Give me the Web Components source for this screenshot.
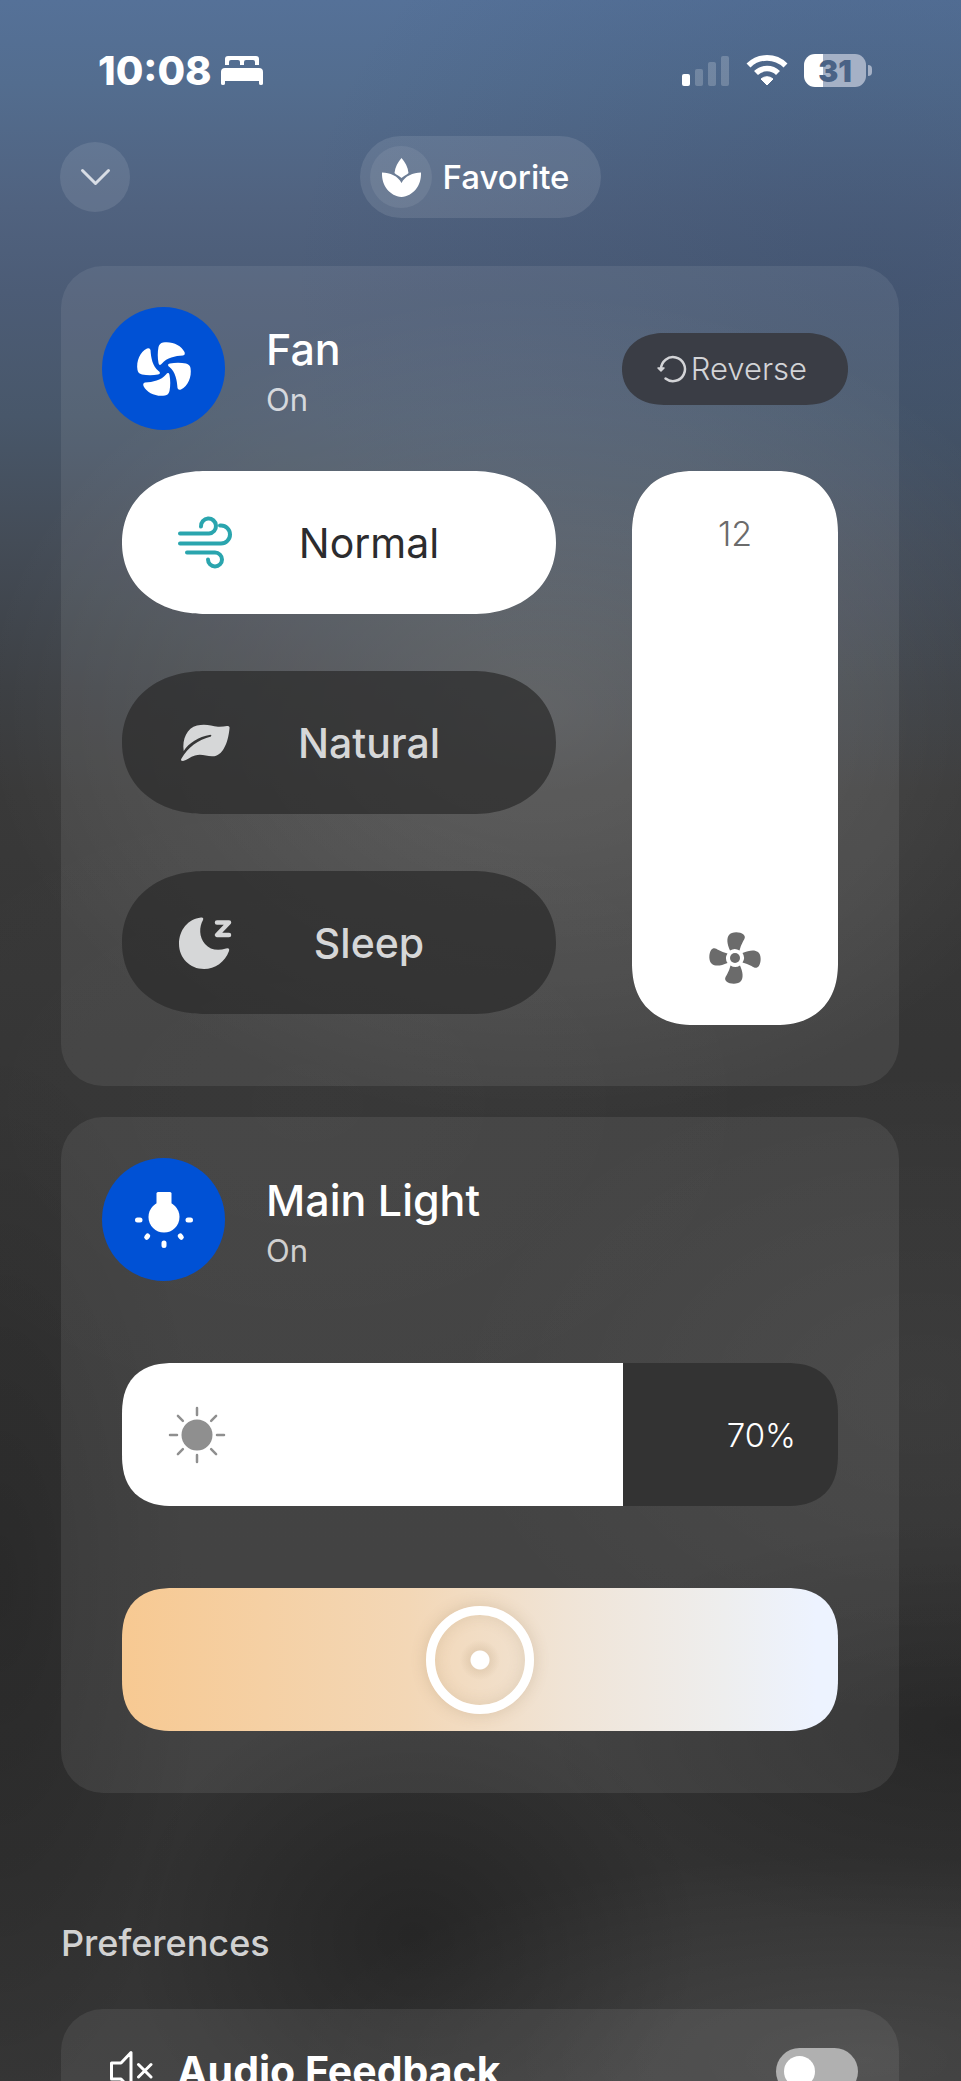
<!DOCTYPE html>
<html lang="en">
<head>
<meta charset="utf-8">
<meta name="viewport" content="width=device-width, initial-scale=1">
<title>Fan</title>
<style>
  html, body {
    margin: 0;
    height: 100%;
  }

  body {
    background: #333333;
    color: #ffffff;
    font-family: Inter, "Liberation Sans", sans-serif;
  }
</style>
</head>
<body>
<device-screen>
  <status-bar slot="status" time="10:08" battery="31"></status-bar>
  <top-bar slot="top">Favorite</top-bar>

  <device-card>
    <ui-icon slot="icon" name="blower" width="54" height="54"></ui-icon>
    <span slot="title">Fan</span>
    <span slot="state">On</span>
    <pill-button slot="action"><ui-icon slot="icon" name="reverse" width="28" height="27"></ui-icon>Reverse</pill-button>
    <fan-controls>
      <mode-button slot="modes" selected><ui-icon slot="icon" name="wind" width="54" height="52"></ui-icon>Normal</mode-button>
      <mode-button slot="modes"><ui-icon slot="icon" name="leaf" width="49" height="38"></ui-icon>Natural</mode-button>
      <mode-button slot="modes"><ui-icon slot="icon" name="moon" width="53" height="52"></ui-icon>Sleep</mode-button>
      <speed-slider slot="speed" value="12" max="12"></speed-slider>
    </fan-controls>
  </device-card>

  <device-card>
    <ui-icon slot="icon" name="bulb" width="58" height="56"></ui-icon>
    <span slot="title">Main Light</span>
    <span slot="state">On</span>
    <light-controls brightness="70" warmth="50"></light-controls>
  </device-card>

  <pref-section heading="Preferences">
    <pref-toggle><ui-icon slot="icon" name="muted" width="42" height="40"></ui-icon>Audio Feedback</pref-toggle>
  </pref-section>
</device-screen>

<script>
const icons = {
  bed: `<path d="M4 9V3a3 3 0 0 1 3-3h28a3 3 0 0 1 3 3v6h-4V6a2 2 0 0 0-2-2h-7a2 2 0 0 0-2 2v3h-4V6a2 2 0 0 0-2-2h-7a2 2 0 0 0-2 2v3z"/>
    <path d="M0 27.500V16a4 4 0 0 1 4-4h34a4 4 0 0 1 4 4v11.500q0 1.500-2 1.500t-2-1.500V25H4v2.500Q4 29 2 29t-2-1.500z"/>`,
  signal: `<rect y="18" width="8" height="12" rx="2"/>
    <g opacity=".2"><rect x="13" y="13" width="8" height="17" rx="2"/><rect x="26" y="6" width="8" height="24" rx="2"/><rect x="39" width="8" height="30" rx="2"/></g>`,
  wifi: `<g fill="none" stroke="currentColor" stroke-width="5.600"><path d="M2.500 10.500A26.300 26.300 0 0 1 39.500 10.500"/><path d="M10 18A15.700 15.700 0 0 1 32 18"/></g>
    <path d="M21 30l-6-6a9 9 0 0 1 12 0z" stroke="currentColor" stroke-linejoin="round"/>`,
  chevron: `<path d="M1.500 1.500l13 13 13-13" fill="none" stroke="currentColor" stroke-width="3" stroke-linecap="round" stroke-linejoin="round"/>`,
  lotus: `<path d="M19.500 0C23 4 26 9 26.500 15 25 16.500 22 18 19.500 20 17 18 14 16.500 12.500 15 13 9 16 4 19.500 0z"/>
    <path d="M0 14.500C8 14.500 16 18 19.500 25 23 18 31 14.500 39 14.500 39.500 28 31 38 19.500 39 8 38-.5 28 0 14.500z"/>`,
  blower: [0, 90, 180, 270].map((a) => `<path transform="rotate(${a} 27 27)" d="M21.500 21C20.500 16 20.500 10 21.500 5Q22.500 1 26 .5C35-1 44 3 47.500 10Q48.500 13 46 13.500C38 14 30 15.500 25 21.500 23.500 23.500 22 23.500 21.500 21z"/>`).join(""),
  reverse: `<path d="M8.500 23.500A12 12 0 1 0 4 14" fill="none" stroke="currentColor" stroke-width="2.500" stroke-linecap="round"/>
    <path d="M1 13h6l-3 3z" stroke="currentColor" stroke-width="1.500" stroke-linejoin="round"/>`,
  wind: `<g fill="none" stroke="currentColor" stroke-width="4" stroke-linecap="round"><path d="M2 16.500h29A7.500 7.500 0 1 0 23 9.500"/><path d="M2 26.500h41a9 9 0 0 0 0-18h-1"/><path d="M9 35.500h28a7 7 0 1 1-7 7"/></g>`,
  leaf: `<path d="M2.700 27C1 15 6 4 16 1.500 24-.5 30 1.500 37 2.800Q42 3 46 2 49 1.500 48.500 4.500C47 20 41 33 31 32.300 25 32 20 29.500 14 31.500 9 33 6 36 2 37Q-1 37 .5 34.500C7 23 17 16 30 12.500Q31 11 29.500 10.800C17 13 8 19 2.700 27z"/>`,
  moon: `<path d="M22 .5Q25 0 24 3C20 10 20 20 26 27C31 33 39 34 47 31.500Q51 30.500 50 34C46 45 36 52 25 52C11 52 0 41 0 27C0 13 9 2 22 .5z"/>
    <path d="M38 5.500h12L38 18h12" fill="none" stroke="currentColor" stroke-width="4.500" stroke-linecap="round" stroke-linejoin="round"/>`,
  propeller: `<circle cx="25" cy="26" r="5"/>` + [0, 90, 180, 270].map((a) => `<path transform="rotate(${a} 25 26)" d="M20 18.500C17 12 16.500 6 19 3C21.500-.5 30-.5 33.500 2.500C36 5 34.500 7 33 9.500Q30.500 14 29.500 18.500A8.500 8.500 0 0 0 20 18.500z"/>`).join(""),
  bulb: `<path d="M21.500 1.500Q21.500 0 23 0h12q1.500 0 1.500 1.500v11h-15z"/><circle cx="29" cy="25" r="15.500"/>
    <g stroke="currentColor" stroke-width="5" stroke-linecap="round"><path d="M2.500 28h2.500M53 28h2.500M29 51v2.500M12.700 44l-1 1.300M45.300 44l1 1.300"/></g>`,
  sun: `<circle cx="28" cy="28" r="15.500"/>` + [0, 45, 90, 135, 180, 225, 270, 315].map((a) => `<path transform="rotate(${a} 28 28)" d="M28 1v7" stroke="currentColor" stroke-width="2.500" stroke-linecap="round"/>`).join(""),
  muted: `<path d="M1.500 12H11L21 1.500v37L11 28H1.500zM28.500 13.500L41 26M41 13.500L28.500 26" fill="none" stroke="currentColor" stroke-width="3" stroke-linecap="round" stroke-linejoin="round"/>`,
};

class UiIcon extends HTMLElement {
  constructor() {
    super();
    this.attachShadow({ mode: "open" });
  }

  connectedCallback() {
    const w = this.getAttribute("width");
    const h = this.getAttribute("height");
    this.shadowRoot.innerHTML = `
      <style>
        :host {
          display: block;
          flex: none;
        }

        svg {
          display: block;
          fill: currentColor;
          overflow: visible;
        }
      </style>
      <svg width="${w}" height="${h}" viewBox="0 0 ${w} ${h}" aria-hidden="true">${icons[this.getAttribute("name")]}</svg>
    `;
  }
}

class DeviceScreen extends HTMLElement {
  constructor() {
    super();
    this.attachShadow({ mode: "open" });
    this.shadowRoot.innerHTML = `
      <style>
        :host {
          display: block;
          height: 100vh;
          overflow-y: auto;
          scrollbar-width: none;
          background:
            radial-gradient(ellipse 58% 20% at 56% 34%, rgba(255, 255, 255, 0.13), transparent),
            radial-gradient(ellipse 50% 16% at 32% 53%, rgba(255, 255, 255, 0.02), transparent),
            radial-gradient(ellipse 50% 16% at 96% 67%, rgba(255, 255, 255, 0.04), transparent),
            radial-gradient(ellipse 44% 10% at 100% 83%, rgba(0, 0, 0, 0.22), transparent),
            radial-gradient(ellipse 30% 12% at 43% 93%, rgba(0, 0, 0, 0.26), transparent),
            radial-gradient(ellipse 22% 26% at 0% 76%, rgba(0, 0, 0, 0.2), transparent),
            radial-gradient(ellipse 60% 10% at 90% 99%, rgba(255, 255, 255, 0.08), transparent),
            radial-gradient(ellipse 60% 24% at 90% 14%, rgba(40, 62, 96, 0.24), transparent),
            linear-gradient(#557198 0%, #536d8f 4%, #50627f 10%, #4c5c76 14%, #48576a 20%, #444c57 26%, #3c3f43 33%, #393939 38%, #353535 50%, #343434 75%, #323232 90%, #363636 100%);
        }

        main {
          display: flex;
          flex-direction: column;
          gap: 31px;
          padding: 48px 62px 61px 61px;
        }
      </style>
      <slot name="status"></slot>
      <slot name="top"></slot>
      <main><slot></slot></main>
    `;
  }
}

class StatusBar extends HTMLElement {
  constructor() {
    super();
    this.attachShadow({ mode: "open" });
  }

  connectedCallback() {
    const level = this.getAttribute("battery");
    this.shadowRoot.innerHTML = `
      <style>
        :host {
          display: flex;
          align-items: center;
          justify-content: space-between;
          box-sizing: border-box;
          height: 136px;
          padding: 5px 89px 0 98px;
        }

        div {
          display: flex;
          align-items: center;
        }

        .left {
          gap: 9px;
        }

        .right {
          gap: 16px;
        }

        time {
          font-size: 40px;
          font-weight: 800;
          line-height: 48px;
        }

        .battery {
          gap: 2px;
        }

        .cell {
          justify-content: center;
          width: 62px;
          height: 33px;
          border-radius: 11px;
          background: linear-gradient(90deg, #ffffff ${level}%, #a5b1c6 ${level}%);
          color: #4a6285;
          font-size: 30px;
          font-weight: 900;
        }

        .nub {
          width: 4px;
          height: 11px;
          border-radius: 0 6px 6px 0;
          background: #a5b1c6;
        }
      </style>
      <div class="left">
        <time>${this.getAttribute("time")}</time>
        <ui-icon name="bed" width="42" height="29"></ui-icon>
      </div>
      <div class="right">
        <ui-icon name="signal" width="48" height="30"></ui-icon>
        <ui-icon name="wifi" width="42" height="31"></ui-icon>
        <div class="battery"><div class="cell">${level}</div><div class="nub"></div></div>
      </div>
    `;
  }
}

class TopBar extends HTMLElement {
  constructor() {
    super();
    this.attachShadow({ mode: "open" });
    this.shadowRoot.innerHTML = `
      <style>
        :host {
          display: grid;
          grid-template-columns: 1fr auto 1fr;
          align-items: center;
          padding: 0 60px;
        }

        button {
          display: flex;
          align-items: center;
          border: 0;
          color: #ffffff;
          font: inherit;
          background: rgba(255, 255, 255, 0.1);
          cursor: pointer;
        }

        .back {
          justify-content: center;
          width: 70px;
          height: 70px;
          padding: 0;
          border-radius: 50%;
          color: #d8dde5;
        }

        .favorite {
          gap: 10px;
          height: 82px;
          padding: 0 31px 0 10px;
          border-radius: 41px;
          font-size: 33px;
          font-weight: 500;
        }

        .badge {
          display: grid;
          place-items: center;
          width: 62px;
          height: 62px;
          border-radius: 50%;
          background: rgba(255, 255, 255, 0.08);
        }
      </style>
      <button class="back" aria-label="Close"><ui-icon name="chevron" width="29" height="16"></ui-icon></button>
      <button class="favorite"><span class="badge"><ui-icon name="lotus" width="39" height="39"></ui-icon></span><slot></slot></button>
    `;
  }
}

class DeviceCard extends HTMLElement {
  constructor() {
    super();
    this.attachShadow({ mode: "open" });
    this.shadowRoot.innerHTML = `
      <style>
        :host {
          display: block;
          padding: 41px;
          border-radius: 42px;
          background: rgba(255, 255, 255, 0.08);
        }

        header {
          display: flex;
          align-items: center;
          gap: 41px;
          padding-right: 10px;
          margin-bottom: 41px;
        }

        .power {
          display: grid;
          place-items: center;
          flex: none;
          width: 123px;
          height: 123px;
          padding: 0;
          border: 0;
          border-radius: 50%;
          background: #0051d5;
          color: #ffffff;
          cursor: pointer;
        }

        .names {
          flex: 1;
          padding-top: 10px;
        }

        h2 {
          margin: 0;
          font-size: 43px;
          font-weight: 500;
          line-height: 52px;
        }

        p {
          margin: 0;
          color: rgba(255, 255, 255, 0.75);
          font-size: 31px;
          line-height: 50px;
        }
      </style>
      <header>
        <button class="power" aria-label="Power"><slot name="icon"></slot></button>
        <div class="names">
          <h2><slot name="title"></slot></h2>
          <p><slot name="state"></slot></p>
        </div>
        <slot name="action"></slot>
      </header>
      <slot></slot>
    `;
  }
}

class PillButton extends HTMLElement {
  constructor() {
    super();
    this.attachShadow({ mode: "open" });
    this.shadowRoot.innerHTML = `
      <style>
        :host {
          display: block;
        }

        button {
          display: flex;
          align-items: center;
          gap: 6px;
          height: 72px;
          padding: 0 41px 0 35px;
          border: 0;
          border-radius: 36px;
          background: #3a3d45;
          color: #d3d4d7;
          font: 300 31px Inter, sans-serif;
          cursor: pointer;
        }

        @supports (corner-shape: squircle) {
          button {
            border-radius: 42px / 36px;
            corner-shape: superellipse(1.1);
          }
        }
      </style>
      <button><slot name="icon"></slot><slot></slot></button>
    `;
  }
}

class FanControls extends HTMLElement {
  constructor() {
    super();
    this.attachShadow({ mode: "open" });
    this.shadowRoot.innerHTML = `
      <style>
        :host {
          display: grid;
          grid-template-columns: 434fr 206fr;
          gap: 76px;
          padding: 0 20px 20px;
        }

        .modes {
          display: flex;
          flex-direction: column;
          gap: 57px;
        }
      </style>
      <div class="modes"><slot name="modes"></slot></div>
      <slot name="speed"></slot>
    `;

    this.addEventListener("click", (e) => {
      const mode = e.target.closest("mode-button");
      if (!mode) return;
      this.querySelectorAll("mode-button").forEach((m) => m.toggleAttribute("selected", m === mode));
    });
  }
}

class ModeButton extends HTMLElement {
  constructor() {
    super();
    this.attachShadow({ mode: "open" });
    this.shadowRoot.innerHTML = `
      <style>
        :host {
          display: block;
        }

        button {
          display: grid;
          grid-template-columns: 124px 1fr;
          align-items: center;
          width: 100%;
          height: 143px;
          padding: 0 64px 0 0;
          border: 0;
          border-radius: 72px;
          background: rgba(42, 42, 42, 0.7);
          color: #d6d7d8;
          font: 500 41px Inter, sans-serif;
          cursor: pointer;
        }

        @supports (corner-shape: squircle) {
          button {
            border-radius: 84px / 72px;
            corner-shape: superellipse(1.1);
          }
        }

        .icon {
          display: grid;
          justify-items: center;
          width: 166px;
        }

        :host([selected]) button {
          background: #ffffff;
          color: #2c2c2e;
          font-weight: 400;
        }

        :host([selected]) .icon {
          color: #2aa5ae;
        }
      </style>
      <button><span class="icon"><slot name="icon"></slot></span><span><slot></slot></span></button>
    `;
  }

  attributeChangedCallback() {
    this.shadowRoot.querySelector("button").setAttribute("aria-pressed", this.hasAttribute("selected"));
  }

  static get observedAttributes() {
    return ["selected"];
  }
}

class SpeedSlider extends HTMLElement {
  constructor() {
    super();
    this.attachShadow({ mode: "open" });
  }

  connectedCallback() {
    const value = this.getAttribute("value");
    const max = this.getAttribute("max");
    this.shadowRoot.innerHTML = `
      <style>
        :host {
          display: grid;
          height: 554px;
          border-radius: 56px;
          overflow: hidden;
          background: rgba(42, 42, 42, 0.7);
        }

        @supports (corner-shape: squircle) {
          :host {
            border-radius: 62px;
            corner-shape: superellipse(1.2);
          }
        }

        input, .face {
          grid-area: 1 / 1;
        }

        input {
          writing-mode: vertical-lr;
          direction: rtl;
          appearance: none;
          width: 100%;
          height: 100%;
          margin: 0;
          background: linear-gradient(0deg, #ffffff var(--fill), transparent var(--fill));
          cursor: pointer;
        }

        input::-webkit-slider-thumb {
          appearance: none;
          width: 100%;
          height: 1px;
        }

        .face {
          display: flex;
          flex-direction: column;
          align-items: center;
          justify-content: space-between;
          padding: 41px 0;
          color: #6b6b6b;
          pointer-events: none;
          z-index: 1;
        }

        output {
          font-size: 34px;
          font-weight: 300;
          line-height: 44px;
        }
      </style>
      <input type="range" aria-label="Fan speed" min="0" max="${max}" value="${value}">
      <div class="face">
        <output>${value}</output>
        <ui-icon name="propeller" width="50" height="52"></ui-icon>
      </div>
    `;

    const input = this.shadowRoot.querySelector("input");
    const output = this.shadowRoot.querySelector("output");
    const update = () => {
      output.textContent = input.value;
      input.style.setProperty("--fill", `${(input.value / max) * 100}%`);
    };
    input.addEventListener("input", update);
    update();
  }
}

class LightControls extends HTMLElement {
  constructor() {
    super();
    this.attachShadow({ mode: "open" });
  }

  connectedCallback() {
    this.shadowRoot.innerHTML = `
      <style>
        :host {
          display: flex;
          flex-direction: column;
          gap: 82px;
          padding: 41px 20px 21px;
        }

        .brightness {
          display: grid;
        }

        input {
          appearance: none;
          width: 100%;
          height: 143px;
          margin: 0;
          border-radius: 46px;
          cursor: pointer;
        }

        @supports (corner-shape: squircle) {
          input {
            border-radius: 52px;
            corner-shape: superellipse(1.3);
          }
        }

        .brightness input, .face {
          grid-area: 1 / 1;
        }

        .brightness input {
          background: linear-gradient(90deg, #ffffff var(--fill), #333333 var(--fill));
        }

        .brightness input::-webkit-slider-thumb {
          appearance: none;
          width: 1px;
          height: 143px;
        }

        .face {
          display: flex;
          align-items: center;
          justify-content: space-between;
          padding: 0 42px 0 47px;
          pointer-events: none;
          z-index: 1;
        }

        .face ui-icon {
          color: #8f8f8f;
        }

        output {
          font-size: 33px;
          font-weight: 300;
        }

        .warmth {
          background: linear-gradient(90deg, #f7c992, #f3d7b6 40%, #f0e4d6 62%, #eeeeee 84%, #edf3ff 97%);
        }

        .warmth::-webkit-slider-thumb {
          appearance: none;
          box-sizing: border-box;
          width: 108px;
          height: 108px;
          border: 9px solid #ffffff;
          border-radius: 50%;
          background: radial-gradient(circle, #ffffff 9px, rgba(150, 120, 80, 0.14) 10px, transparent 20px);
          box-shadow: 0 0 16px rgba(120, 90, 50, 0.2), inset 0 0 16px rgba(120, 90, 50, 0.14);
        }
      </style>
      <div class="brightness">
        <input type="range" aria-label="Brightness" min="0" max="100" value="${this.getAttribute("brightness")}">
        <div class="face">
          <ui-icon name="sun" width="56" height="56"></ui-icon>
          <output></output>
        </div>
      </div>
      <input class="warmth" type="range" aria-label="Color temperature" min="0" max="100" value="${this.getAttribute("warmth")}">
    `;

    const input = this.shadowRoot.querySelector(".brightness input");
    const output = this.shadowRoot.querySelector("output");
    const update = () => {
      output.textContent = `${input.value}%`;
      input.style.setProperty("--fill", `${input.value}%`);
    };
    input.addEventListener("input", update);
    update();
  }
}

class PrefSection extends HTMLElement {
  constructor() {
    super();
    this.attachShadow({ mode: "open" });
  }

  connectedCallback() {
    this.shadowRoot.innerHTML = `
      <style>
        :host {
          display: block;
          margin-top: 95px;
        }

        h3 {
          margin: 0 0 42px;
          color: rgba(255, 255, 255, 0.8);
          font-size: 36px;
          font-weight: 500;
          line-height: 48px;
        }

        section {
          border-radius: 42px;
          background: rgba(255, 255, 255, 0.08);
        }
      </style>
      <h3>${this.getAttribute("heading")}</h3>
      <section><slot></slot></section>
    `;
  }
}

class PrefToggle extends HTMLElement {
  constructor() {
    super();
    this.attachShadow({ mode: "open" });
    this.shadowRoot.innerHTML = `
      <style>
        :host {
          display: block;
        }

        label {
          display: flex;
          align-items: center;
          gap: 25px;
          padding: 38px 41px 38px 49px;
          font-size: 41px;
          font-weight: 700;
          line-height: 48px;
          cursor: pointer;
        }

        .text {
          flex: 1;
        }

        input {
          appearance: none;
          flex: none;
          display: flex;
          align-items: center;
          width: 82px;
          height: 47px;
          margin: 0;
          padding: 0 8px;
          border-radius: 24px;
          background: #b0b0b0;
        }

        input::before {
          content: "";
          width: 31px;
          height: 31px;
          border-radius: 50%;
          background: #ffffff;
        }

        input:checked {
          justify-content: flex-end;
          background: #0051d5;
        }
      </style>
      <label><slot name="icon"></slot><span class="text"><slot></slot></span><input type="checkbox" role="switch"></label>
    `;
  }
}

customElements.define("ui-icon", UiIcon);
customElements.define("device-screen", DeviceScreen);
customElements.define("status-bar", StatusBar);
customElements.define("top-bar", TopBar);
customElements.define("device-card", DeviceCard);
customElements.define("pill-button", PillButton);
customElements.define("fan-controls", FanControls);
customElements.define("mode-button", ModeButton);
customElements.define("speed-slider", SpeedSlider);
customElements.define("light-controls", LightControls);
customElements.define("pref-section", PrefSection);
customElements.define("pref-toggle", PrefToggle);
</script>
</body>
</html>
